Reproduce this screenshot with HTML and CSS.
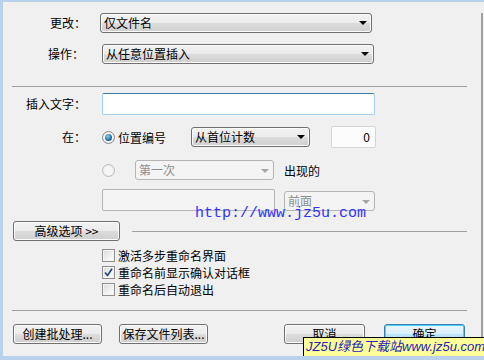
FILE: index.html
```html
<!DOCTYPE html>
<html>
<head>
  <title>批量重命名</title>
  <link rel="stylesheet" href="styles.css">
</head>
<body>
  <div class="window">
    <div class="main">
      <div class="row row-change">
        <span class="label label-change">更改：</span>
        <div class="select select-wide"><span>仅文件名</span><i class="arrow"></i></div>
      </div>
      <div class="row row-action">
        <span class="label label-action">操作：</span>
        <div class="select select-wide"><span>从任意位置插入</span><i class="arrow"></i></div>
      </div>

      <div class="sep sep-top"></div>

      <div class="row row-text">
        <span class="label">插入文字：</span>
        <div class="textbox textbox-focus"></div>
      </div>

      <div class="row row-at">
        <span class="label">在：</span>
        <span class="radio radio-on"></span>
        <span class="radio-text">位置编号</span>
        <div class="select select-count"><span>从首位计数</span><i class="arrow"></i></div>
        <div class="numbox">0</div>
      </div>

      <div class="row row-occur">
        <span class="label"></span>
        <span class="radio radio-off"></span>
        <div class="select select-first disabled"><span>第一次</span><i class="arrow"></i></div>
        <span class="occur-text">出现的</span>
      </div>

      <div class="row row-find">
        <span class="label"></span>
        <div class="textbox textbox-find disabled"></div>
        <div class="select select-side disabled"><span>前面</span><i class="arrow"></i></div>
      </div>

      <div class="row row-advanced">
        <button class="btn btn-advanced">高级选项 &gt;&gt;</button>
        <div class="sep sep-advanced"></div>
      </div>

      <div class="checks">
        <div class="check-row"><span class="checkbox"></span><span>激活多步重命名界面</span></div>
        <div class="check-row">
          <span class="checkbox">
            <svg width="9" height="9" viewBox="0 0 9 9"><path d="M1 4.5 L3.5 7.5 L8 0.8" fill="none" stroke="#21418a" stroke-width="1.6"/></svg>
          </span>
          <span>重命名前显示确认对话框</span>
        </div>
        <div class="check-row"><span class="checkbox"></span><span>重命名后自动退出</span></div>
      </div>

      <div class="sep sep-bottom"></div>

      <div class="buttons">
        <button class="btn btn-batch">创建批处理...</button>
        <button class="btn btn-save">保存文件列表...</button>
        <button class="btn btn-cancel">取消</button>
        <button class="btn btn-ok">确定</button>
      </div>
    </div>
    <div class="edge"></div>

    <div class="mark-url">http://www.jz5u.com</div>
    <div class="mark-banner">JZ5U绿色下载站www.jz5u.com</div>
  </div>
</body>
</html>
```

FILE: styles.css
```css
body {
  margin: 0;
  background: #f0f0f0;
  font-family: "Noto Sans CJK SC", sans-serif;
  font-size: 12px;
  color: #000;
}
.window {
  position: relative;
  height: 360px;
  box-sizing: border-box;
  border-top: 2px solid #b9d1ea;
  border-left: 3px solid #b9d1ea;
  border-bottom: 4px solid #b9d1ea;
  display: flex;
  overflow: hidden;
}
.main {
  flex: 1;
  padding-left: 10px;
}
.edge {
  width: 0;
  margin: 11px 1px 0 0;
  border-left: 2px solid #a0a0a0;
}

.row {
  display: flex;
  align-items: center;
}
.label {
  width: 73px;
  padding-right: 2px;
  margin-right: 14px;
  text-align: right;
  line-height: 14px;
  white-space: nowrap;
}
.label-change { padding-right: 0; }
.label-action { padding-right: 4px; width: 71px; }

.row-change { margin-top: 11px; height: 20px; }
.row-action { margin-top: 11px; height: 20px; }
.row-text { margin-top: 6px; height: 22px; }
.row-at { margin-top: 11px; height: 22px; }
.row-occur { margin-top: 12px; height: 20px; }
.row-find { margin-top: 9px; height: 22px; align-items: flex-start; }
.row-advanced { margin-top: 10px; height: 20px; }

.sep {
  height: 1px;
  background: #a0a0a0;
}
.sep-top { margin: 22px 0 0 -1px; width: 455px; }
.sep-bottom { margin: 12px 0 0 -1px; width: 455px; }
.sep-advanced { margin: 0 0 0 12px; width: 335px; }

/* combo boxes */
.select {
  position: relative;
  height: 20px;
  box-sizing: border-box;
  border: 1px solid #707070;
  border-radius: 3px;
  background: linear-gradient(#f2f2f2, #ebebeb 50%, #dddddd 50%, #cfcfcf);
  box-shadow: inset 0 0 0 1px #fcfcfc;
  padding-left: 3px;
  line-height: 18px;
  white-space: nowrap;
}
.select .arrow {
  position: absolute;
  right: 4px;
  top: 7px;
  width: 0;
  height: 0;
  border-left: 4px solid transparent;
  border-right: 4px solid transparent;
  border-top: 4px solid #000;
}
.select-wide { width: 272px; }
.select-count { width: 119px; margin-left: 25px; }
.select-first { width: 139px; margin-left: 20px; }
.select-side { width: 91px; margin: 2px 0 0 9px; }
.select.disabled {
  border-color: #b5b5b5;
  background: #f4f4f4;
  box-shadow: none;
  color: #8d8d8d;
}
.select.disabled .arrow {
  border-top-color: #a5a5a5;
  top: 8px;
}

/* text boxes */
.textbox {
  height: 22px;
  box-sizing: border-box;
  border: 1px solid #c6c6c6;
  border-radius: 2px;
  background: #fcfcfc;
}
.textbox-focus {
  width: 273px;
  border-color: #a7cef0;
  border-top-color: #3d7bad;
  background: #fff;
}
.textbox-find { width: 173px; }
.textbox.disabled {
  border-color: #b5b5b5;
  background: #f4f4f4;
}
.numbox {
  width: 45px;
  height: 22px;
  box-sizing: border-box;
  margin-left: 21px;
  border: 1px solid #d4d4d4;
  border-radius: 2px;
  background: #fcfcfc;
  text-align: right;
  padding-right: 5px;
  line-height: 20px;
}

/* radio buttons */
.radio {
  width: 13px;
  height: 13px;
  box-sizing: border-box;
  border-radius: 50%;
  border: 1px solid #8a8a8a;
  background: radial-gradient(circle, #ffffff 40%, #d6d6d6);
  display: flex;
  align-items: center;
  justify-content: center;
}
.radio-on::after {
  content: "";
  width: 7px;
  height: 7px;
  border-radius: 50%;
  background: radial-gradient(circle at 40% 35%, #8fd3f5, #1a6aa6 60%, #0d3d68);
}
.radio-off {
  border-color: #bdbdbd;
  background: radial-gradient(circle, #f6f6f6 40%, #e4e4e4);
}
.radio-text {
  margin-left: 3px;
  white-space: nowrap;
}
.occur-text {
  margin-left: 10px;
  white-space: nowrap;
}

/* buttons */
.btn {
  height: 20px;
  box-sizing: border-box;
  padding: 0;
  border: 1px solid #707070;
  border-radius: 3px;
  background: linear-gradient(#f2f2f2, #ebebeb 50%, #dddddd 50%, #cfcfcf);
  box-shadow: inset 0 0 0 1px #fcfcfc;
  font-family: "Noto Sans CJK SC", sans-serif;
  font-size: 12px;
  line-height: 18px;
  color: #000;
}
.btn-advanced { width: 107px; }
.buttons {
  display: flex;
  margin-top: 13px;
}
.btn-batch { width: 89px; }
.btn-save { width: 89px; margin-left: 17px; }
.btn-cancel { width: 81px; margin-left: 76px; }
.btn-ok {
  width: 81px;
  margin-left: 19px;
  border-color: #3c7fb1;
  background: linear-gradient(#eaf6fd, #d9f0fc 50%, #bee6fd 50%, #a7d9f5);
  box-shadow: inset 0 0 0 1px #48d0f8;
}

/* check boxes */
.checks {
  margin: 6px 0 0 89px;
}
.check-row {
  display: flex;
  align-items: center;
  height: 17px;
  white-space: nowrap;
}
.checkbox {
  width: 13px;
  height: 13px;
  box-sizing: border-box;
  margin-right: 3px;
  border: 1px solid #8f8f8f;
  background: linear-gradient(135deg, #dcdcdc, #ffffff);
  box-shadow: inset 0 0 0 1px #f4f4f4;
  display: flex;
  align-items: center;
  justify-content: center;
}

/* watermarks */
.mark-url {
  position: absolute;
  left: 192px;
  top: 203px;
  font-family: "Liberation Mono", monospace;
  font-size: 15px;
  color: #3232ff;
  white-space: nowrap;
}
.mark-banner {
  position: absolute;
  left: 300px;
  top: 335px;
  width: 190px;
  height: 20px;
  box-sizing: border-box;
  border: 1px solid #000;
  background: #ffff99;
  padding-left: 2px;
  font-family: "Liberation Sans", "Noto Sans CJK SC", sans-serif;
  font-size: 13px;
  font-style: italic;
  line-height: 18px;
  color: #2323b8;
  white-space: nowrap;
}
```
